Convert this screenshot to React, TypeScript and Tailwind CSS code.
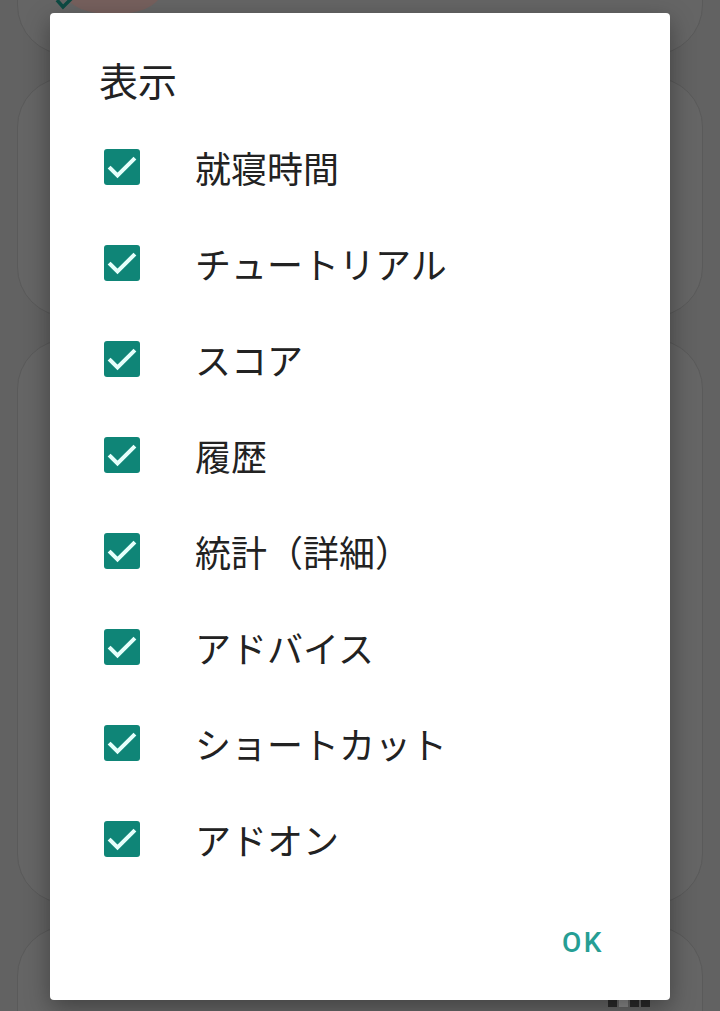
import React from "react";

const items = [
  "就寝時間",
  "チュートリアル",
  "スコア",
  "履歴",
  "統計（詳細）",
  "アドバイス",
  "ショートカット",
  "アドオン",
];

const cjk = { fontFamily: '"Noto Sans CJK JP", "Noto Sans", sans-serif' };

function Check() {
  return (
    <div className="w-[36px] h-[36px] rounded-[3px] bg-[#0f8577] flex items-center justify-center shrink-0">
      <svg width="36" height="36" viewBox="0 0 36 36">
        <path d="M6.5 19.5 L13.5 26.5 L29.5 10.5" fill="none" stroke="#e6fffb" strokeWidth="4" strokeLinecap="square" />
      </svg>
    </div>
  );
}

export default function App() {
  return (
    <div className="relative w-[720px] h-[1011px] overflow-hidden bg-[#626262]">
      {/* background cards */}
      <div className="flex flex-col gap-[22px] px-[17px] -mt-[60px]">
        <div className="relative h-[115px] rounded-[50px] border border-[#5a5a5a] bg-[#656565]">
          <svg className="absolute left-[36px] top-[59px]" width="110" height="20" viewBox="0 0 110 20">
            <path d="M14 0 L104 0 Q92 14 59 14 Q26 14 14 0 Z" fill="#76605d" />
            <path d="M3 0 L9 7 L20 -4" fill="none" stroke="#0d4a43" strokeWidth="3.5" />
          </svg>
        </div>
        <div className="h-[240px] rounded-[50px] border border-[#5a5a5a] bg-[#656565]" />
        <div className="h-[565px] rounded-[50px] border border-[#5a5a5a] bg-[#656565]" />
        <div className="relative h-[200px] rounded-[50px] border border-[#5a5a5a] bg-[#656565]">
          <div className="absolute left-[590px] top-[71px] grid grid-cols-4 gap-[2px]">
            <div className="w-[9px] h-[9px] bg-[#2a2a2a]" />
            <div className="w-[9px] h-[9px] bg-[#8a8a8a]" />
            <div className="w-[9px] h-[9px] bg-[#2a2a2a]" />
            <div className="w-[9px] h-[9px] bg-[#2a2a2a]" />
          </div>
        </div>
      </div>

      {/* dialog */}
      <div className="absolute left-[50px] top-[13px] w-[620px] h-[987px] bg-white rounded-[4px] shadow-[0_8px_24px_rgba(0,0,0,0.35)] flex flex-col">
        <div className="pt-[42px] pl-[49px] h-[90px] text-[39px] leading-[48px] text-[#222222]" style={cjk}>
          表示
        </div>
        <div className="mt-[16px] flex flex-col">
          {items.map((t) => (
            <div key={t} className="h-[96px] flex items-center pl-[54px]">
              <Check />
              <span className="ml-[55px] text-[36px] leading-[48px] text-[#222222]" style={cjk}>
                {t}
              </span>
            </div>
          ))}
        </div>
        <div className="mt-[36px] flex justify-end pr-[66px]">
          <span
            className="h-[40px] text-[28px] leading-[40px] font-medium tracking-[2.5px] text-[#269e94]"
            style={{ fontFamily: "Roboto, sans-serif" }}
          >
            OK
          </span>
        </div>
      </div>
    </div>
  );
}
